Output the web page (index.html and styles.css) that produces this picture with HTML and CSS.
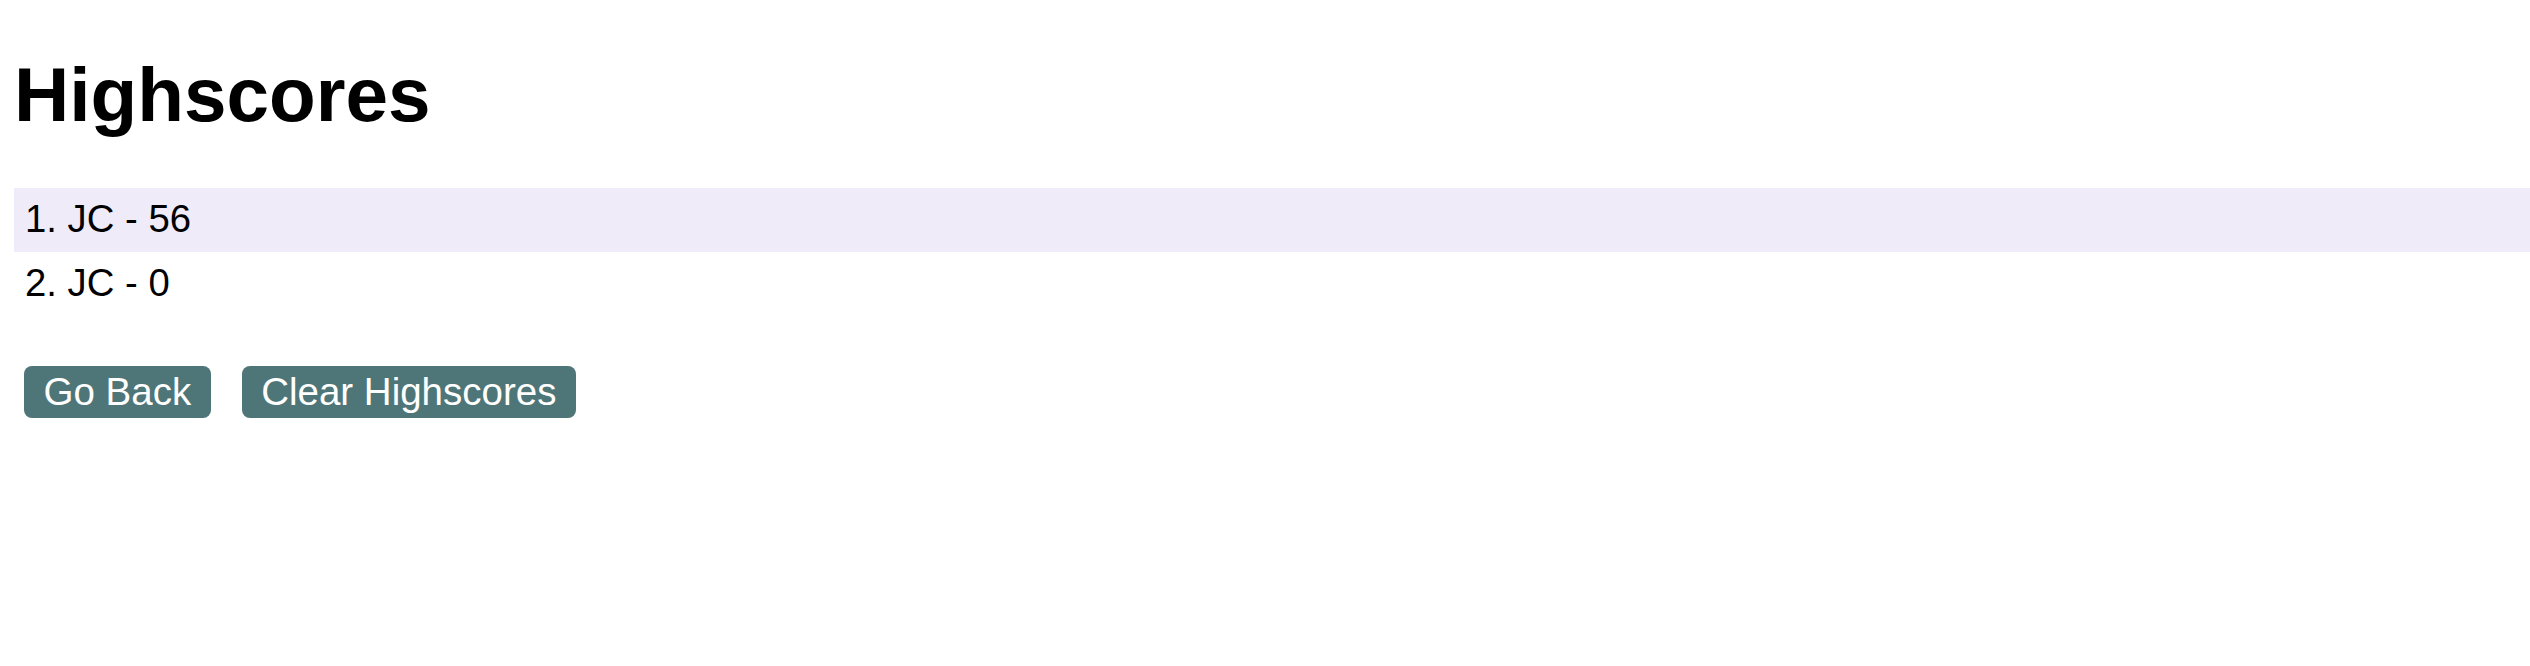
FILE: index.html
```html
<!DOCTYPE html>
<html lang="en">
<head>
<meta charset="utf-8">
<title>Highscores</title>
<link rel="stylesheet" href="styles.css">
</head>
<body>
<main class="page">
  <h1 class="title">Highscores</h1>
  <ol class="scores">
    <li class="score score-odd">1. JC - 56</li>
    <li class="score">2. JC - 0</li>
  </ol>
  <div class="actions">
    <button class="btn" type="button">Go Back</button>
    <button class="btn" type="button">Clear Highscores</button>
  </div>
</main>
</body>
</html>
```

FILE: styles.css
```css
html, body {
  margin: 0;
  padding: 0;
  background: #ffffff;
}

body {
  font-family: "Liberation Sans", Arial, Helvetica, sans-serif;
  color: #000000;
}

.page {
  padding-left: 14px;
}

.title {
  font-size: 76.5px;
  font-weight: bold;
  line-height: 88px;
  margin: 51px 0 49px 0;
}

.scores {
  list-style: none;
  margin: 0;
  padding: 0;
  display: flex;
  flex-direction: column;
}

.score {
  font-size: 38.3px;
  line-height: 61px;
  height: 64px;
  padding-left: 11px;
}

.score-odd {
  background: #efebf9;
}

.actions {
  display: flex;
  gap: 31px;
  margin-top: 50px;
  padding-left: 10px;
}

.btn {
  font-family: "Liberation Sans", Arial, Helvetica, sans-serif;
  font-size: 38.5px;
  line-height: 44px;
  height: 52px;
  padding: 4px 19.5px;
  border: none;
  border-radius: 8px;
  background: #4e7678;
  color: #ffffff;
}
```
